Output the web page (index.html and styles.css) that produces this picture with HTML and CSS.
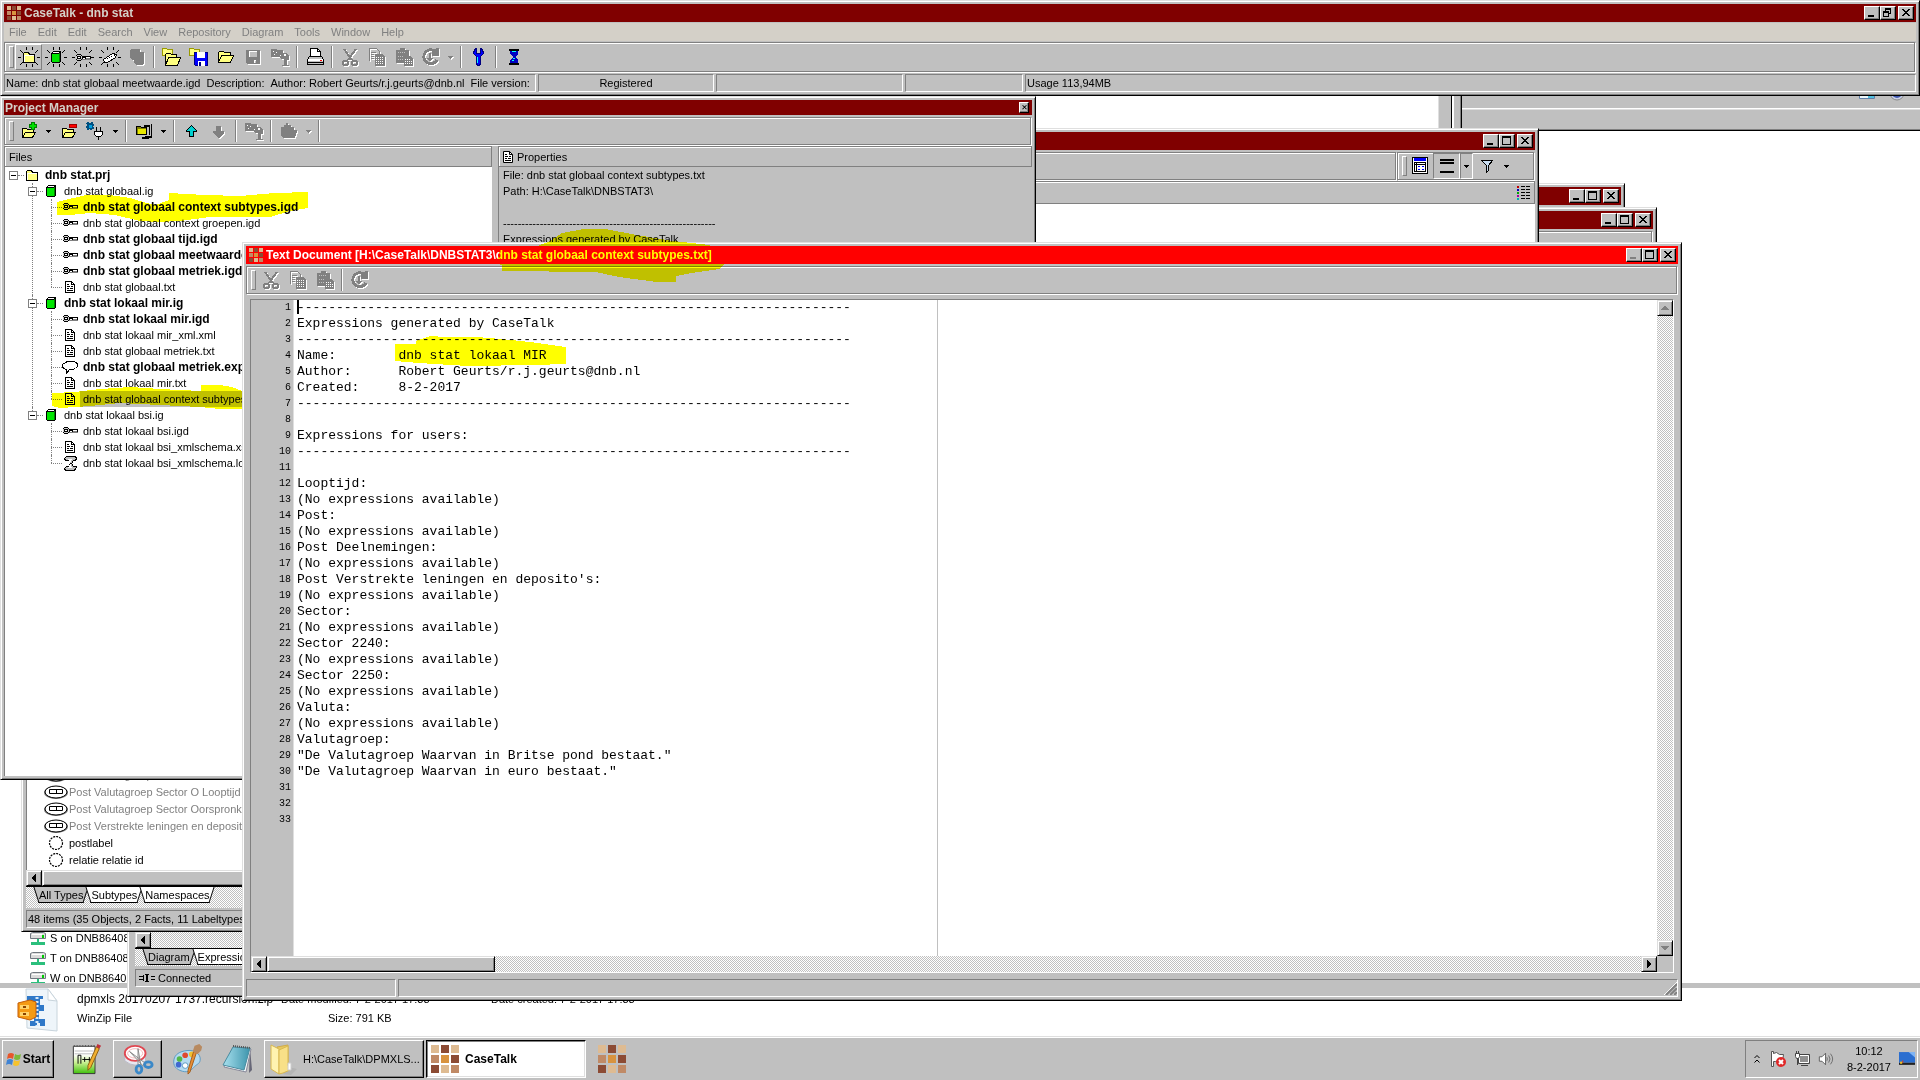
FILE: index.html
```html
<!DOCTYPE html>
<html lang="en">
  <head>
    <meta charset="UTF-8" />
    <meta name="viewport" content="width=device-width, initial-scale=1.0" />
    <title>CaseTalk - dnb stat</title>
    <link rel="stylesheet" href="styles.css">
  </head>
  <body>
    <!-- Icon set -->
    <svg class="defs" aria-hidden="true">
      <symbol id="logo" viewBox="0 0 28 28">
        <path fill="#debb92" d="M0 0h8v8H0zM20 0h8v8h-8zM10 20h8v8h-8z" />
        <path fill="#8c4b34" d="M10 0h8v8h-8zM20 10h8v8h-8zM0 20h8v8H0z" />
        <path fill="#c08a66" d="M0 10h8v8H0zM20 20h8v8h-8z" />
        <path fill="#d8933f" d="M10 10h8v8h-8z" />
      </symbol>
      <symbol id="min" viewBox="0 0 12 10"><path fill="currentColor" d="M2 7h6v2H2z" /></symbol>
      <symbol id="max" viewBox="0 0 12 10"><path fill="currentColor" d="M1 0h9v9H1zM2 2v6h7V2z" fill-rule="evenodd" /></symbol>
      <symbol id="restore" viewBox="0 0 12 10"><path fill="currentColor" fill-rule="evenodd" d="M3 0h6v6H7v3H1V3h2zM4 2v1h3v2h1V2zM2 5v3h4V5z" /></symbol>
      <symbol id="close" viewBox="0 0 12 10"><path fill="currentColor" d="M2 1h2v1h1v1h2V2h1V1h2v1H9v1H8v1H7v1h1v1h1v1h1v1H8V7H7V6H5v1H4v1H2V7h1V6h1V5h1V4H4V3H3V2H2z" /></symbol>
      <symbol id="left" viewBox="0 0 10 10"><path fill="currentColor" d="M6 1h1v8H6V8H5V7H4V6H3V4h1V3h1V2h1z" /></symbol>
      <symbol id="right" viewBox="0 0 10 10"><path fill="currentColor" d="M3 1h1v1h1v1h1v1h1v2H6v1H5v1H4v1H3z" /></symbol>
      <symbol id="up" viewBox="0 0 10 10"><path fill="currentColor" d="M4 3h2v1h1v1h1v1h1v1H1V6h1V5h1V4h1z" /></symbol>
      <symbol id="down" viewBox="0 0 10 10"><path fill="currentColor" d="M1 3h8v1H8v1H7v1H6v1H4V6H3V5H2V4H1z" /></symbol>
      <symbol id="drop" viewBox="0 0 5 3"><path fill="currentColor" d="M0 0h5v1H4v1H3v1H2V2H1V1H0z" /></symbol>

      <symbol id="rays" viewBox="0 0 24 20">
        <path stroke="#000" fill="none" d="M1 10.500h3M20 10.500h3M3 3l3 3M21 3l-3 3M3 18l3-3M21 18l-3-3M9.500 0v3M15.500 0v3M9.500 17v3M15.500 17v3" />
      </symbol>
      <symbol id="folder" viewBox="0 0 16 16">
        <path fill="#ffff80" stroke="#000" d="M2.500 13.500v-9l1-1h4l1 2h5v8z" />
        <path fill="#fff" d="M3 6h1v7H3zM3 6h10v1H3z" />
      </symbol>
      <symbol id="openfolder" viewBox="0 0 20 20">
        <path fill="#ffff80" stroke="#000" d="M2.500 15.500v-10l1-1h4l1 1h6v3h3l-3 7z" />
        <path fill="none" stroke="#000" d="M2.500 15.500l3-7h10" />
      </symbol>
      <symbol id="openfolders" viewBox="0 0 20 20">
        <path fill="#ffff80" stroke="#999900" d="M.500 8.500v-7h4l1 1h5v6z" />
        <path fill="#ffff80" stroke="#000" d="M3.500 18.500v-11l1-1h4l1 1h5v3h4l-3 8z" />
        <path fill="none" stroke="#000" d="M3.500 18.500l3-8h10" />
      </symbol>
      <symbol id="savefolder" viewBox="0 0 20 20">
        <path fill="#ffff80" stroke="#999900" d="M.500 8.500v-7h4l1 1h5v6z" />
        <path fill="#00f" stroke="#000080" d="M5.500 5.500h13v13h-12l-1-1z" />
        <path fill="#fff" d="M8 5h8v6H8zM9 14h7v5H9z" /><path fill="#000080" d="M10 15h2v4h-2z" />
      </symbol>
      <symbol id="disk" viewBox="0 0 20 20">
        <path fill="#808080" fill-rule="evenodd" d="M3 3h14v14H4l-1-1zM6 4v6h8V4zM11 13h2v3h-2z" />
      </symbol>
      <symbol id="db" viewBox="0 0 16 16">
        <path fill="#000" d="M4 3l1-1h8v10l-1 2H4l-1-1V4z" />
        <path fill="#00e600" d="M4 5h7v8H4z" /><path fill="#008000" d="M11 5l1-2v9l-1 1z" />
        <path fill="#fff" d="M5 3h6v1H5z" />
      </symbol>
      <symbol id="key" viewBox="0 0 16 16">
        <path fill="#000" d="M1 5h1V4h4v1h1v1h9v4H7v0H6v1H2v-1H1z" />
        <path fill="#d0d0d0" d="M2 5h4v1H2zM1 6h1v3H1zM2 9h4v1H2zM6 6h1v3H6z" />
        <path fill="#fff" d="M3 7h2v1H3zM8 8h2v1H8zM11 7h4v1h-4z" />
        <path fill="#808080" d="M11 8h4v1h-4zM7 9h9v1H7z" />
      </symbol>
      <symbol id="tag" viewBox="0 0 16 16">
        <path fill="#fff" stroke="#000" d="M1.500 10.500l9-6 4 1-1 3-8 5h-3z" />
        <path fill="#000" d="M5 9h1v1H5zM7 8h1v1H7zM9 7h1v1H9zM12 6h1v1h-1z" />
      </symbol>
      <symbol id="stack" viewBox="0 0 20 20">
        <path fill="#808080" d="M3 3l1-1h8l1 1v2h3l1 1v10l-2 2H9l-2-2v-3H5l-2-2z" />
      </symbol>
      <symbol id="info" viewBox="0 0 20 20">
        <path fill="#808080" d="M1 2h5l1 1h6v7H1zM9 6h8l2 3v4h-2v5h2v1h-7v-1h2v-6h-3z" />
        <path fill="#fff" d="M3 4h1v1H3zM6 5h1v1H6zM4 7h1v1H4zM10 8h1v1h-1zM14 7h2v2h-2z" />
      </symbol>
      <symbol id="printer" viewBox="0 0 20 20">
        <path fill="#fff" stroke="#000" d="M5.500 10.500v-9h7l3 3v6z" />
        <path fill="none" stroke="#000" d="M12.500 1.500v3h3" />
        <path fill="#c0c0c0" stroke="#000" d="M2.500 12.500l2-3h12l2 3v5h-16z" />
        <path fill="#fff" d="M3 12h15v2H3z" /><path fill="red" d="M15 13h2v1h-2z" /><path d="M3 15h15v1H3z" />
      </symbol>
      <symbol id="cut" viewBox="0 0 20 20">
        <path fill="none" stroke="#808080" stroke-width="2" d="M4 2l8 11M16 2L8 13" />
        <path fill="none" stroke="#808080" stroke-width="2" d="M4 14h3l1 1v2l-1 1H4l-1-1v-2zM13 14h3l1 1v2l-1 1h-3l-1-1v-2z" />
      </symbol>
      <symbol id="copy" viewBox="0 0 20 20">
        <path fill="none" stroke="#808080" d="M2.500 13.500v-12h7l3 3v2M4 5.500h5M4 7.500h3M4 9.500h3M4 11.500h3" />
        <path fill="#808080" d="M8 7h7l3 3v9H8z" />
        <path stroke="#fff" d="M9 10.500h7M9 12.500h8M9 14.500h8M9 16.500h8" stroke-dasharray="1 1" />
      </symbol>
      <symbol id="paste" viewBox="0 0 20 20">
        <path fill="#808080" d="M2 3h4V1h5v2h4v6h-4v7H2zM10 9h6l3 3v7h-9z" />
        <path stroke="#fff" d="M11 12.500h6M11 14.500h7M11 16.500h7" stroke-dasharray="1 1" />
        <path stroke="#c0c0c0" d="M4 5.500h7M4 9.500h5M4 12.500h5" stroke-dasharray="1 1" />
      </symbol>
      <symbol id="refresh" viewBox="0 0 20 20">
        <path fill="none" stroke="#808080" stroke-width="3" d="M15 5a7 7 0 1 0 1 8" />
        <path fill="#808080" d="M12 2l6-1v8h-7zM8 6h2v5h2l-3 4-3-4h2z" />
      </symbol>
      <symbol id="wrench" viewBox="0 0 20 20">
        <path fill="#00f" stroke="#000080" d="M5.500 2.500l-1 4 3 3v8l2 1 2-1v-8l3-3-1-4-2-1v5h-4v-5z" />
        <path fill="#00ffff" d="M8 10h1v6H8z" />
      </symbol>
      <symbol id="hourglass" viewBox="0 0 20 20">
        <path fill="#000" d="M5 2h10v2H5zM5 16h10v2H5z" />
        <path fill="#0000c0" d="M6 4h8v3l-3 3 3 3v3H6v-3l3-3-3-3z" />
        <path fill="#00ffff" d="M8 4h4v1H8zM9 11h2v1H9zM8 13h2v1H8z" />
      </symbol>
      <symbol id="addfolder" viewBox="0 0 20 20">
        <path fill="#ffff80" stroke="#000" d="M3.500 16.500v-9h4l1 1h6v3h2l-3 5z" />
        <path fill="none" stroke="#000" d="M3.500 16.500l3-5h9" />
        <path fill="#00e000" stroke="#008000" d="M12.500 1.500h3v2h2v3h-2v2h-3v-2h-2v-3h2z" />
      </symbol>
      <symbol id="delfolder" viewBox="0 0 20 20">
        <path fill="#ffff80" stroke="#000" d="M3.500 16.500v-9h4l1 1h6v3h2l-3 5z" />
        <path fill="none" stroke="#000" d="M3.500 16.500l3-5h9" />
        <path fill="red" stroke="#a00000" d="M10.500 3.500h7v3h-7z" />
      </symbol>
      <symbol id="plug" viewBox="0 0 20 20">
        <path fill="#005080" d="M1 1h2v1h2V1h2v2h1v2H7v1h1v2H6v1H4V8H3v1H1V7H0V5h1V3H0z" /><path fill="#00a0e0" d="M3 4h3v3H3z" />
        <path fill="#fff" stroke="#000" d="M8.500 10.500h8v3l-2 2h-4l-2-2zM10.500 10v-4M14.500 10v-4" /><path fill="none" stroke="#000" d="M12.500 16v3" />
      </symbol>
      <symbol id="clamp" viewBox="0 0 20 20">
        <path fill="#808000" stroke="#000" d="M2.500 13.500v-8h4l1 1h5v7z" />
        <path fill="#e8e800" d="M4 8h8v5H4z" />
        <path fill="none" stroke="#000" stroke-width="3" d="M10 4h6v11h-5" />
        <path fill="none" stroke="#c0c0c0" d="M10 3.500h6.500v11H11" /><path fill="#000" d="M8 16h7v2H8z" />
      </symbol>
      <symbol id="arrowup" viewBox="0 0 20 20"><path fill="#00d0d0" stroke="#000" d="M9.500 4.500l-5 5v1h3v5h4v-5h3v-1z" /></symbol>
      <symbol id="arrowdown" viewBox="0 0 20 20"><path fill="#808080" d="M7 5h5v5h3v2l-5 5H9l-5-5v-2h3z" /></symbol>
      <symbol id="grayfolder" viewBox="0 0 20 20"><path fill="#808080" d="M2 6h3V4h2V2h2v2h3v2h3v3h3v2l-2 6H4l-2-2z" /></symbol>

      <symbol id="doc" viewBox="0 0 16 16">
        <path fill="#fff" stroke="#000" d="M3.500 13.500v-11h6l3 3v8z" />
        <path fill="none" stroke="#000" d="M9.500 2.500v3h3M5 5.500h2M5 7.500h3M9 7.500h2M5 9.500h2M8 9.500h3M5 11.500h6" />
      </symbol>
      <symbol id="bubble" viewBox="0 0 16 16">
        <path fill="#fff" stroke="#000" d="M3.500 3.500l2-1h6l3 1 1 2v2l-2 2-3 1h-3l-3 4v-4l-3-1-1-2v-2z" />
      </symbol>
      <symbol id="scroll" viewBox="0 0 16 16">
        <path fill="#c0c0c0" stroke="#000" d="M2.500 3.500l2-2h9l1 2-1 2h-2l-2 3 2 3h3l-1 3-2 1h-8l-1-2 2-2h2l2-3-2-3h-3z" />
        <path fill="#fff" d="M6 4h4L8 8l2 5H6l2-4z" />
      </symbol>
      <symbol id="object" viewBox="0 0 24 14">
        <ellipse cx="12" cy="7.500" rx="11" ry="5.500" fill="#fff" stroke="#808080" stroke-width="2" />
        <ellipse cx="12" cy="7" rx="11" ry="6" fill="#fff" stroke="#000" />
        <path fill="none" stroke="#000" d="M5.500 4.500h13v4h-13zM12.500 4.500v4" />
      </symbol>
      <symbol id="label" viewBox="0 0 24 14"><circle cx="12" cy="7" r="6.500" fill="none" stroke="#000" stroke-width="1.200" stroke-dasharray="2 1" /></symbol>
      <symbol id="drive" viewBox="0 0 16 16">
        <path fill="#dcdcdc" stroke="#707880" d="M.500 3.500l2-1h11l2 1v5H.500z" /><path fill="#fff" d="M2 4h10v1H2z" />
        <path fill="#0c0" d="M12 5h2v3h-2z" /><path fill="#2bbf7c" d="M7 9h2v3h6v3H1v-3h6z" />
      </symbol>
      <symbol id="link" viewBox="0 0 16 10"><path fill="none" stroke="#000" d="M0 3.500h4M0 6.500h4M4.500 2v6M12 3.500h4M12 6.500h4" /><path d="M6 1h4v1H9v6h1v1H6V8h1V2H6z" /></symbol>

      <symbol id="winzip" viewBox="0 0 44 46">
        <path fill="#eef5fa" stroke="#c8d4dc" d="M9 1h22l9 12v30l-30-3z" /><path fill="#fff" stroke="#c8d4dc" d="M31 1v11l9 1z" />
        <path fill="#2f78c8" d="M10 8h16v3h-3v6h4v6h-5v8h6v7h-5v-3h-3v3h-7v-5h4v-9h-7z" />
        <path stroke="#d6e9fa" stroke-width="3" stroke-dasharray="2 2" d="M20 9v29" />
        <path fill="#f59a13" stroke="#c45d08" d="M1 15l12-3 6 2v15l-6 3-12-3z" /><path fill="#ffd36a" d="M3 17h9v4H3zM3 24h9v4H3z" />
        <path fill="#8a4300" d="M6 18h3v2H6zM6 25h3v2H6z" />
      </symbol>
      <symbol id="winflag" viewBox="0 0 16 16">
        <path fill="#e8562a" d="M2 3q3-2 6 0L7 8Q4 6 1 8z" /><path fill="#7db83a" d="M9 3q3 2 6 0l-1 5q-3 2-6 0z" />
        <path fill="#3f83d4" d="M1 9q3-2 6 0l-1 5q-3-2-6 0z" /><path fill="#f6c22d" d="M8 9q3 2 6 0l-1 5q-3 2-6 0z" />
      </symbol>
      <symbol id="npp" viewBox="0 0 32 34">
        <defs><linearGradient id="g1" x2="0" y2="1"><stop offset=".3" stop-color="#fff" /><stop offset=".6" stop-color="#c8f090" /><stop offset="1" stop-color="#3fc00c" /></linearGradient></defs>
        <path fill="url(#g1)" stroke="#333" d="M1.500 3.500h23v29h-23z" /><path stroke="#555" stroke-width="2" stroke-dasharray="1 2" d="M2 3h22" />
        <path stroke="#bbb" d="M3 8.500h20M3 11.500h20" />
        <path fill="none" stroke="#000" d="M6.500 22v-9h3v9M11 17.500h5M13.500 15v5M16 17.500h5M18.500 15v5" />
        <path fill="#f0b030" stroke="#8a5a10" d="M26 4l3 2-9 20-3 3v-5z" /><path fill="#c0303a" d="M27 1l4 2-2 3-3-2z" />
      </symbol>
      <symbol id="snip" viewBox="0 0 34 34">
        <path fill="#e8e8f0" stroke="#b8b8c4" d="M3 13v6q11 9 22 0v-6z" />
        <ellipse cx="14" cy="11" rx="11" ry="8" fill="#fff" stroke="#e04852" stroke-width="2" /><ellipse cx="14" cy="11" rx="8" ry="5" fill="none" stroke="#f4b4b8" />
        <path fill="#f4f4f4" stroke="#888" d="M8 9l14 15 2-3zM17 6l3 17h-3z" />
        <ellipse cx="18" cy="28" rx="3" ry="4" fill="none" stroke="#3a88c8" stroke-width="3" /><ellipse cx="28" cy="23" rx="4" ry="3" fill="none" stroke="#3a88c8" stroke-width="3" />
      </symbol>
      <symbol id="paint" viewBox="0 0 34 34">
        <path fill="#b4daf0" stroke="#5a98c0" d="M16 8c9-1 14 4 14 9s-3 5-6 8-6 7-13 5S1 24 2 18s6-9 14-10z" />
        <circle cx="8" cy="17" r="3" fill="#54b848" /><circle cx="14" cy="13" r="3" fill="#e04830" /><circle cx="21" cy="12" r="3" fill="#f0c030" />
        <circle cx="7" cy="23" r="3" fill="#4068d0" /><circle cx="14" cy="24" r="3" fill="#fff" stroke="#5a98c0" />
        <path fill="#e89038" stroke="#a05a18" d="M26 10l-7 21-2 2v-4l6-20z" /><path fill="#b88a60" d="M22 9l2-6 5-2 3 3-1 4-4 4z" />
      </symbol>
      <symbol id="notepad" viewBox="0 0 32 32">
        <defs><linearGradient id="g2"><stop offset="0" stop-color="#a8e0ee" /><stop offset="1" stop-color="#3c94ac" /></linearGradient></defs>
        <path fill="#667" d="M28 5l2 22-3 3z" /><path fill="#f4f8fa" stroke="#889" d="M11 4l18 2-5 23-22-5z" />
        <path fill="url(#g2)" stroke="#4a8ca0" d="M11 4l17 1-6 22-21-5z" /><path stroke="#555" stroke-width="2" stroke-dasharray="1 1" d="M11 3l18 2" />
      </symbol>
      <symbol id="bigfolder" viewBox="0 0 28 32">
        <path fill="#b4b4b4" d="M20 24l8 2-6 6-8-1z" />
        <path fill="#e8c860" stroke="#d0ac48" d="M8 4l11-2v22l-6 4z" /><path fill="#fff3b0" stroke="#d8b850" d="M2 2l8 4v25l-8-5z" />
        <path fill="#f8e088" stroke="#d8b850" d="M10 7l9-4v19l2 5-7 3-4 1z" /><path fill="#fff" stroke="#ccc" d="M19 20h3v7h-3z" />
      </symbol>
      <symbol id="flag" viewBox="0 0 16 16">
        <path fill="#fff" stroke="#555" d="M1.500 15.500v-15h2v2l3-1 3 2h4l-1 7-4-1-3 1h-2v5z" />
        <circle cx="11" cy="11" r="5" fill="#e02828" /><path stroke="#fff" stroke-width="2" d="M9 9l4 4M13 9l-4 4" />
      </symbol>
      <symbol id="net" viewBox="0 0 16 16">
        <path fill="#909090" stroke="#444" d="M4.500 3.500h11v9h-11z" /><path fill="none" stroke="#fff" d="M5.500 4.500h9v7h-9z" />
        <path fill="#fff" stroke="#444" d="M1.500 5.500v-3h4v3l-1 2h-2zM2.500 0v2M4.500 0v2M3.500 8v6M7 14.500h7" />
      </symbol>
      <symbol id="volume" viewBox="0 0 18 16">
        <path fill="#fff" stroke="#555" d="M1.500 5.500h3l4-4v13l-4-4h-3z" /><path fill="none" stroke="#666" d="M10 6q1 2 0 4M12 4q3 4 0 8M14 2q5 6 0 12" />
      </symbol>
      <symbol id="chevrons" viewBox="0 0 6 10"><path fill="none" stroke="#000" d="M.500 4l2.500-2.500 2.500 2.500M.500 8.500l2.500-2.500 2.500 2.500" /></symbol>
      <symbol id="screen" viewBox="0 0 15 13">
        <path fill="#2a6ed0" d="M0 0h15v10H0z" /><path fill="#7fb4f4" d="M9 0h6v5z" /><path fill="#222" d="M0 10h15v2H0z" />
        <path fill="#f0c020" d="M1 9h2v2H1z" /><path fill="#e04020" d="M3 8h1v2H3z" />
      </symbol>
      <symbol id="cards" viewBox="0 0 16 16"><path fill="#eef8fc" stroke="#6080a8" d="M.500 3.500h15v10H.500z" /><path fill="#50c0e0" d="M9 4h6v9H9z" /><path fill="#fff" d="M10 6h4v1h-4zM10 9h4v1h-4z" /></symbol>
      <symbol id="ring" viewBox="0 0 16 16"><circle cx="8" cy="8" r="7" fill="#c8d0e8" stroke="#888" /><circle cx="8" cy="8" r="5" fill="#4058b0" /></symbol>
      <symbol id="form" viewBox="0 0 16 18">
        <path fill="#fff" stroke="#000" d="M.500.500h15v16H.500z" /><path fill="#00f" d="M2 1h12v3H2z" />
        <path fill="none" stroke="#000" d="M2.500 5.500h11v9h-11zM2 7.500h11M4.500 6v8" /><path fill="#00f" d="M6 9h2v1H6zM10 9h2v1h-2zM6 12h2v1H6zM10 12h2v1h-2z" />
      </symbol>
      <symbol id="lines" viewBox="0 0 14 16"><path d="M0 1h14v2H0zM0 4h14v2H0zM0 13h14v2H0z" /></symbol>
      <symbol id="funnel" viewBox="0 0 14 14"><path fill="#c8dcf0" stroke="#000" d="M1.500 1.500h11l-4 5v5l-2 2v-7z" /></symbol>
      <symbol id="list" viewBox="0 0 14 14">
        <path fill="#c00000" d="M0 0h2v2H0z" /><path fill="#0000c0" d="M0 3h2v2H0z" /><path fill="#00a000" d="M0 6h2v2H0z" /><path fill="#a000a0" d="M0 9h2v2H0z" /><path fill="#00b0b0" d="M0 12h2v2H0z" />
        <path stroke="#000" d="M4 .500h4M9 .500h4M4 3.500h4M9 3.500h4M4 6.500h4M9 6.500h4M4 9.500h4M9 9.500h4M4 12.500h4M9 12.500h4" />
      </symbol>
      <symbol id="grip" viewBox="0 0 13 13"><path stroke="#fff" d="M0 13L13 0M5 13l8-8M9 13l4-4" /><path stroke="#808080" stroke-width="2" d="M2 13L13 2M6 13l7-7M10 13l3-3" /></symbol>
    </svg>

    <main class="desktop">
      <!-- Explorer behind everything -->
      <section class="explorer">
        <ul class="drives">
          <li><svg class="i16"><use href="#drive" /></svg>S on DNB86408</li>
          <li><svg class="i16"><use href="#drive" /></svg>T on DNB86408</li>
          <li><svg class="i16"><use href="#drive" /></svg>W on DNB86408</li>
        </ul>
        <div class="details">
          <svg class="file-icon"><use href="#winzip" /></svg>
          <div class="file-info">
            <span class="file-name">dpmxls 20170207 1737.recursion.zip</span>
            <span>Date modified: 7-2-2017 17:38</span>
            <span class="created">Date created: 7-2-2017 17:38</span>
            <span>WinZip File</span>
            <span class="size">Size: 791 KB</span>
          </div>
        </div>
      </section>

      <div class="pane-a"></div>
      <div class="pane-b">
        <svg class="i16"><use href="#cards" /></svg>
        <svg class="i16"><use href="#ring" /></svg>
      </div>

      <!-- Main application window -->
      <section class="window main-window">
        <header class="title">
          <svg class="logo"><use href="#logo" /></svg>
          <h1>CaseTalk - dnb stat</h1>
          <div class="win-btns">
            <button aria-label="Minimize"><svg><use href="#min" /></svg></button>
            <button aria-label="Restore"><svg><use href="#restore" /></svg></button>
            <button aria-label="Close" class="x"><svg><use href="#close" /></svg></button>
          </div>
        </header>
        <nav class="menu">
          <button>File</button><button>Edit</button><button>Edit</button><button>Search</button><button>View</button><button>Repository</button><button>Diagram</button><button>Tools</button><button>Window</button><button>Help</button>
        </nav>
        <div class="toolbar">
          <button class="pressed" aria-label="New project"><svg class="i24"><use href="#rays" /><use href="#folder" x="4" y="2" width="16" height="16" /></svg></button>
          <button aria-label="New repository"><svg class="i24"><use href="#rays" /><use href="#db" x="4" y="2" width="16" height="16" /></svg></button>
          <button aria-label="New diagram"><svg class="i24"><use href="#rays" /><use href="#key" x="4" y="3" width="16" height="16" /></svg></button>
          <button aria-label="New label"><svg class="i24"><use href="#rays" /><use href="#tag" x="4" y="2" width="16" height="16" /></svg></button>
          <button aria-label="Copies" disabled><svg><use href="#stack" /></svg></button>
          <i class="sep"></i>
          <button aria-label="Open project"><svg><use href="#openfolders" /></svg></button>
          <button aria-label="Save project"><svg><use href="#savefolder" /></svg></button>
          <button aria-label="Open"><svg><use href="#openfolder" /></svg></button>
          <button aria-label="Save" disabled><svg><use href="#disk" /></svg></button>
          <button aria-label="Info" disabled><svg><use href="#info" /></svg></button>
          <i class="sep"></i>
          <button aria-label="Print"><svg><use href="#printer" /></svg></button>
          <i class="sep"></i>
          <button aria-label="Cut" disabled><svg><use href="#cut" /></svg></button>
          <button aria-label="Copy" disabled><svg><use href="#copy" /></svg></button>
          <button aria-label="Paste" disabled><svg><use href="#paste" /></svg></button>
          <button aria-label="Refresh" disabled><svg><use href="#refresh" /></svg></button>
          <button aria-label="More" class="drop" disabled><svg><use href="#drop" /></svg></button>
          <i class="sep"></i>
          <button aria-label="Options"><svg><use href="#wrench" /></svg></button>
          <i class="sep"></i>
          <button aria-label="Wait"><svg><use href="#hourglass" /></svg></button>
        </div>
        <footer class="status">
          <div class="cell c-file"><span>Name: dnb stat globaal meetwaarde.igd</span><span>Description:</span><span>Author: Robert Geurts/r.j.geurts@dnb.nl</span><span>File version:</span></div>
          <div class="cell c-reg">Registered</div>
          <div class="cell c-blank"></div>
          <div class="cell c-short"></div>
          <div class="cell">Usage 113,94MB</div>
        </footer>
      </section>

      <!-- Inactive document windows -->
      <section class="window win-c">
        <header class="title">
          <div class="win-btns">
            <button aria-label="Minimize"><svg><use href="#min" /></svg></button>
            <button aria-label="Maximize"><svg><use href="#max" /></svg></button>
            <button aria-label="Close" class="x"><svg><use href="#close" /></svg></button>
          </div>
        </header>
      </section>
      <section class="window win-d">
        <header class="title">
          <div class="win-btns">
            <button aria-label="Minimize"><svg><use href="#min" /></svg></button>
            <button aria-label="Maximize"><svg><use href="#max" /></svg></button>
            <button aria-label="Close" class="x"><svg><use href="#close" /></svg></button>
          </div>
        </header>
        <div class="toolbar"></div>
      </section>
      <section class="window win-b">
        <header class="title">
          <div class="win-btns">
            <button aria-label="Minimize"><svg><use href="#min" /></svg></button>
            <button aria-label="Maximize"><svg><use href="#max" /></svg></button>
            <button aria-label="Close" class="x"><svg><use href="#close" /></svg></button>
          </div>
        </header>
        <div class="bars">
          <div class="toolbar plain"></div>
          <div class="toolbar view-tools">
            <button aria-label="Form"><svg class="form"><use href="#form" /></svg></button>
            <button aria-label="Rows" class="sunk"><svg class="rows"><use href="#lines" /></svg></button>
            <button aria-label="Row options" class="drop sunk"><svg><use href="#drop" /></svg></button>
            <button aria-label="Filter"><svg class="funnel"><use href="#funnel" /></svg></button>
            <button aria-label="Filter options" class="drop"><svg><use href="#drop" /></svg></button>
          </div>
        </div>
        <div class="list-head"><svg class="list"><use href="#list" /></svg></div>
        <div class="blank"></div>
      </section>

      <section class="window win-diagram">
        <div class="dither"><button class="bevel" aria-label="Scroll left"><svg><use href="#left" /></svg></button></div>
        <div class="tabs"><button class="tab on">Diagram</button><button class="tab">Expressions</button></div>
        <div class="status"><div class="cell"><svg class="link"><use href="#link" /></svg>Connected</div></div>
      </section>

      <section class="window win-types">
        <ul class="types">
          <li class="fact"><svg><use href="#object" /></svg>Post Valutagroep Sector</li>
          <li class="fact"><svg><use href="#object" /></svg>Post Valutagroep Sector O Looptijd R</li>
          <li class="fact"><svg><use href="#object" /></svg>Post Valutagroep Sector Oorspronkelijk</li>
          <li class="fact"><svg><use href="#object" /></svg>Post Verstrekte leningen en deposito's</li>
          <li><svg><use href="#label" /></svg>postlabel</li>
          <li><svg><use href="#label" /></svg>relatie relatie id</li>
          <li><svg><use href="#object" /></svg></li>
        </ul>
        <div class="dither"><button class="bevel" aria-label="Scroll left"><svg><use href="#left" /></svg></button><div class="thumb fill"></div></div>
        <div class="tabs tall"><button class="tab on">All Types</button><button class="tab">Subtypes</button><button class="tab">Namespaces</button></div>
        <div class="status"><div class="cell">48 items (35 Objects, 2 Facts, 11 Labeltypes)</div></div>
      </section>

      <!-- Project manager -->
      <section class="window pm">
        <header class="title small">
          <h2>Project Manager</h2>
          <button class="tiny-x" aria-label="Close"><svg><use href="#close" /></svg></button>
        </header>
        <div class="toolbar">
          <button aria-label="Add"><svg><use href="#addfolder" /></svg></button><button class="drop" aria-label="Add options"><svg><use href="#drop" /></svg></button>
          <button aria-label="Remove"><svg><use href="#delfolder" /></svg></button>
          <button aria-label="Connect"><svg><use href="#plug" /></svg></button><button class="drop" aria-label="Connect options"><svg><use href="#drop" /></svg></button>
          <i class="sep"></i>
          <button aria-label="Archive"><svg><use href="#clamp" /></svg></button><button class="drop" aria-label="Archive options"><svg><use href="#drop" /></svg></button>
          <i class="sep"></i>
          <button aria-label="Move up"><svg><use href="#arrowup" /></svg></button>
          <button aria-label="Move down" disabled><svg><use href="#arrowdown" /></svg></button>
          <i class="sep"></i>
          <button aria-label="Info" disabled><svg><use href="#info" /></svg></button>
          <i class="sep"></i>
          <button aria-label="Folder" disabled><svg><use href="#grayfolder" /></svg></button><button class="drop" aria-label="Folder options" disabled><svg><use href="#drop" /></svg></button>
          <i class="sep"></i>
        </div>
        <div class="pm-body">
          <div class="files">
            <div class="head">Files</div>
            <ul class="tree">
              <li>
                <div class="row"><i class="box"></i><i class="dots"></i><svg><use href="#folder" /></svg><b>dnb stat.prj</b></div>
                <ul>
                  <li>
                    <div class="row"><i class="box"></i><i class="dots"></i><svg><use href="#db" /></svg><span>dnb stat globaal.ig</span></div>
                    <ul>
                      <li><div class="row leaf"><i class="dots"></i><svg><use href="#key" /></svg><b>dnb stat globaal context subtypes.igd</b></div></li>
                      <li><div class="row leaf"><i class="dots"></i><svg><use href="#key" /></svg><span>dnb stat globaal context groepen.igd</span></div></li>
                      <li><div class="row leaf"><i class="dots"></i><svg><use href="#key" /></svg><b>dnb stat globaal tijd.igd</b></div></li>
                      <li><div class="row leaf"><i class="dots"></i><svg><use href="#key" /></svg><b>dnb stat globaal meetwaarde.igd</b></div></li>
                      <li><div class="row leaf"><i class="dots"></i><svg><use href="#key" /></svg><b>dnb stat globaal metriek.igd</b></div></li>
                      <li><div class="row leaf"><i class="dots"></i><svg><use href="#doc" /></svg><span>dnb stat globaal.txt</span></div></li>
                    </ul>
                  </li>
                  <li>
                    <div class="row"><i class="box"></i><i class="dots"></i><svg><use href="#db" /></svg><b>dnb stat lokaal mir.ig</b></div>
                    <ul>
                      <li><div class="row leaf"><i class="dots"></i><svg><use href="#key" /></svg><b>dnb stat lokaal mir.igd</b></div></li>
                      <li><div class="row leaf"><i class="dots"></i><svg><use href="#doc" /></svg><span>dnb stat lokaal mir_xml.xml</span></div></li>
                      <li><div class="row leaf"><i class="dots"></i><svg><use href="#doc" /></svg><span>dnb stat globaal metriek.txt</span></div></li>
                      <li><div class="row leaf"><i class="dots"></i><svg><use href="#bubble" /></svg><b>dnb stat globaal metriek.exp</b></div></li>
                      <li><div class="row leaf"><i class="dots"></i><svg><use href="#doc" /></svg><span>dnb stat lokaal mir.txt</span></div></li>
                      <li><div class="row leaf"><i class="dots"></i><svg><use href="#doc" /></svg><span class="selected">dnb stat globaal context subtypes.txt</span></div></li>
                    </ul>
                  </li>
                  <li>
                    <div class="row"><i class="box"></i><i class="dots"></i><svg><use href="#db" /></svg><span>dnb stat lokaal bsi.ig</span></div>
                    <ul>
                      <li><div class="row leaf"><i class="dots"></i><svg><use href="#key" /></svg><span>dnb stat lokaal bsi.igd</span></div></li>
                      <li><div class="row leaf"><i class="dots"></i><svg><use href="#doc" /></svg><span>dnb stat lokaal bsi_xmlschema.xsd</span></div></li>
                      <li><div class="row leaf"><i class="dots"></i><svg><use href="#scroll" /></svg><span>dnb stat lokaal bsi_xmlschema.log</span></div></li>
                    </ul>
                  </li>
                </ul>
              </li>
            </ul>
          </div>
          <div class="props">
            <div class="head"><svg class="i16"><use href="#doc" /></svg>Properties</div>
            <div class="prop-text">
              <p>File: dnb stat globaal context subtypes.txt</p>
              <p>Path: H:\CaseTalk\DNBSTAT3\</p>
              <p>&nbsp;</p>
              <p>----------------------------------------------------------</p>
              <p>Expressions generated by CaseTalk</p>
            </div>
          </div>
        </div>
      </section>

      <!-- Active text document -->
      <section class="window doc-window">
        <header class="title active">
          <svg class="logo"><use href="#logo" /></svg>
          <h2>Text Document [H:\CaseTalk\DNBSTAT3\dnb stat globaal context subtypes.txt]</h2>
          <div class="win-btns">
            <button aria-label="Minimize" disabled><svg><use href="#min" /></svg></button>
            <button aria-label="Maximize"><svg><use href="#max" /></svg></button>
            <button aria-label="Close" class="x"><svg><use href="#close" /></svg></button>
          </div>
        </header>
        <div class="toolbar">
          <button aria-label="Cut" disabled><svg><use href="#cut" /></svg></button>
          <button aria-label="Copy" disabled><svg><use href="#copy" /></svg></button>
          <button aria-label="Paste" disabled><svg><use href="#paste" /></svg></button>
          <i class="sep"></i>
          <button aria-label="Refresh" disabled><svg><use href="#refresh" /></svg></button>
        </div>
        <div class="editor">
          <div class="page">
            <pre class="gutter">1
2
3
4
5
6
7
8
9
10
11
12
13
14
15
16
17
18
19
20
21
22
23
24
25
26
27
28
29
30
31
32
33</pre>
            <i class="caret"></i>
            <textarea aria-label="Document text" spellcheck="false" wrap="off">
-----------------------------------------------------------------------
Expressions generated by CaseTalk
-----------------------------------------------------------------------
Name:        dnb stat lokaal MIR
Author:      Robert Geurts/r.j.geurts@dnb.nl
Created:     8-2-2017
-----------------------------------------------------------------------

Expressions for users:
-----------------------------------------------------------------------

Looptijd:
(No expressions available)
Post:
(No expressions available)
Post Deelnemingen:
(No expressions available)
Post Verstrekte leningen en deposito's:
(No expressions available)
Sector:
(No expressions available)
Sector 2240:
(No expressions available)
Sector 2250:
(No expressions available)
Valuta:
(No expressions available)
Valutagroep:
"De Valutagroep Waarvan in Britse pond bestaat."
"De Valutagroep Waarvan in euro bestaat."


</textarea>
          </div>
          <div class="dither vert">
            <button class="bevel" aria-label="Scroll up" disabled><svg><use href="#up" /></svg></button>
            <button class="bevel" aria-label="Scroll down" disabled><svg><use href="#down" /></svg></button>
          </div>
          <div class="dither">
            <button class="bevel" aria-label="Scroll left"><svg><use href="#left" /></svg></button>
            <div class="thumb"></div>
            <button class="bevel end" aria-label="Scroll right"><svg><use href="#right" /></svg></button>
          </div>
        </div>
        <footer class="status">
          <div class="cell c-pos"></div>
          <div class="cell last"><svg class="grip"><use href="#grip" /></svg></div>
        </footer>
      </section>

      <!-- Marker strokes -->
      <svg class="marker" aria-hidden="true">
        <path d="M57 202L86 195H110L130 198 147 203 156 205 169 200V193L205 195 240 196 275 193 308 192V208L290 211 270 217H210L180 221 158 222 140 221 115 215 90 213 70 215H57z" />
        <path d="M52 393L75 392 100 389 130 387 160 389 201 391V385H220L232 387 242 391V409L220 409 200 407 160 405 120 403 90 406 60 408 52 406z" />
        <path d="M395 344L416 344V341L430 336 446 337 477 337 501 339 530 342 566 347V364L534 365 468 366 419 363 395 361z" />
        <path d="M499 249L535 247 548 242 562 233 584 229 605 229 637 235 673 241 709 245 717 249V264H725L719 269 691 273 676 276V282H657L619 277 596 272 502 271V265L498 264z" />
      </svg>
    </main>

    <footer class="taskbar">
      <button class="task start"><svg class="i16"><use href="#winflag" /></svg>Start</button>
      <button class="task flat" aria-label="Notepad++"><svg><use href="#npp" /></svg></button>
      <button class="task tool" aria-label="Snipping Tool"><svg><use href="#snip" /></svg></button>
      <button class="task flat" aria-label="Paint"><svg><use href="#paint" /></svg></button>
      <button class="task flat" aria-label="Notepad"><svg><use href="#notepad" /></svg></button>
      <button class="task wide"><svg><use href="#bigfolder" /></svg>H:\CaseTalk\DPMXLS...</button>
      <button class="task wide current"><svg><use href="#logo" /></svg>CaseTalk</button>
      <button class="task flat" aria-label="CaseTalk"><svg class="i28"><use href="#logo" /></svg></button>
      <div class="tray">
        <svg class="chev"><use href="#chevrons" /></svg>
        <svg class="i16"><use href="#flag" /></svg>
        <svg class="i16"><use href="#net" /></svg>
        <svg class="i16"><use href="#volume" /></svg>
        <time><span>10:12</span><span>8-2-2017</span></time>
        <svg class="i16"><use href="#screen" /></svg>
      </div>
    </footer>
  </body>
</html>
```
FILE: styles.css
```css
* {
  box-sizing: border-box;
}

body {
  margin: 0;
  height: 100vh;
  display: flex;
  flex-direction: column;
  overflow: hidden;
  background: #fff;
  color: #000;
  font-family: "Liberation Sans", Arial, sans-serif;
  font-size: 11px;
  line-height: 16px;
}

h1,
h2,
p,
ul,
pre {
  margin: 0;
  padding: 0;
  list-style: none;
}

button {
  margin: 0;
  padding: 0;
  border: 0;
  background: none;
  color: inherit;
  font: inherit;
}

svg {
  display: block;
  flex: none;
}

.defs {
  position: absolute;
  width: 0;
  height: 0;
}

.i16 {
  width: 16px;
  height: 16px;
}

.desktop {
  position: relative;
  flex: 1;
  min-height: 0;
  overflow: hidden;
}

/* Windows */
.window {
  position: absolute;
  display: flex;
  flex-direction: column;
  padding: 3px;
  background: #c0c0c0;
  border: 1px solid;
  border-color: #dfdfdf #000 #000 #dfdfdf;
  box-shadow: inset 1px 1px #fff, inset -1px -1px #808080;
}

.title {
  display: flex;
  align-items: center;
  height: 18px;
  flex: none;
  margin-bottom: 1px;
  padding: 0 2px 0 3px;
  background: #800000;
  color: #d4d0c8;
}

.title.active {
  background: #f00;
  color: #fff;
}

.title.small {
  height: 15px;
  padding: 0 3px 0 1px;
  justify-content: space-between;
}

.title h1,
.title h2 {
  font-size: 12px;
  font-weight: bold;
  white-space: nowrap;
}

.logo {
  width: 14px;
  height: 14px;
  margin-right: 3px;
}

.win-btns {
  display: flex;
  margin-left: auto;
}

.win-btns button,
.tiny-x {
  width: 16px;
  height: 14px;
  padding: 1px;
  background: #c0c0c0;
  border: 1px solid;
  border-color: #fff #000 #000 #fff;
  box-shadow: inset -1px -1px #808080;
  color: #000;
}

.win-btns .x {
  margin-left: 2px;
}

.win-btns svg {
  width: 12px;
  height: 10px;
  shape-rendering: crispEdges;
}

.win-btns button:disabled {
  color: #808080;
}

.tiny-x {
  width: 10px;
  height: 11px;
}

.tiny-x svg {
  width: 7px;
  height: 7px;
}

.menu {
  display: flex;
  align-items: center;
  gap: 11px;
  height: 19px;
  padding-left: 5px;
  background: #d4d0c8;
  color: #808080;
}

/* Toolbars */
.toolbar {
  position: relative;
  display: flex;
  align-items: center;
  height: 28px;
  flex: none;
  margin: 1px 1px 1px 0;
  padding-left: 10px;
  border: 1px solid #808080;
  box-shadow: inset 1px 1px #fff, 1px 1px #fff;
}

.toolbar::before {
  content: "";
  position: absolute;
  left: 4px;
  top: 3px;
  bottom: 3px;
  width: 3px;
  border: 1px solid;
  border-color: #fff #808080 #808080 #fff;
}

.toolbar button {
  display: flex;
  align-items: center;
  justify-content: center;
  width: 27px;
  height: 26px;
}

.toolbar svg {
  width: 20px;
  height: 20px;
  shape-rendering: crispEdges;
}

.toolbar .i24 {
  width: 24px;
}

.toolbar .drop {
  width: 13px;
}

.toolbar .drop svg {
  width: 5px;
  height: 3px;
}

.toolbar button:disabled {
  color: #808080;
}

.toolbar button:disabled svg {
  filter: drop-shadow(1px 1px 0 #fff);
}

.toolbar .pressed {
  border: 1px solid;
  border-color: #fff #808080 #808080 #fff;
}

.sep {
  width: 8px;
  height: 22px;
  background: linear-gradient(to right, transparent 3px, #808080 3px 4px, #fff 4px 5px, transparent 5px);
}

/* Status bars */
.status {
  display: flex;
  gap: 2px;
}

.cell {
  flex: 1;
  display: flex;
  align-items: center;
  gap: 6px;
  height: 18px;
  padding: 0 1px;
  overflow: hidden;
  white-space: nowrap;
  border: 1px solid;
  border-color: #808080 #fff #fff #808080;
}

.main-window {
  left: 0;
  right: 0;
  top: 0;
  height: 96px;
}

.main-window .toolbar {
  height: 30px;
}

.main-window .status {
  margin-top: 1px;
}

.c-file {
  flex: 0 0 532px;
}

.c-reg {
  flex: 0 0 176px;
  justify-content: center;
}

.c-blank {
  flex: 0 0 187px;
}

.c-short {
  flex: 0 0 118px;
}

.c-pos {
  flex: 0 0 150px;
}

/* Explorer */
.explorer {
  height: 100%;
  display: flex;
  flex-direction: column;
}

.drives {
  flex: 1;
  min-height: 0;
  display: flex;
  flex-direction: column;
  justify-content: flex-end;
  overflow: hidden;
  padding-left: 30px;
}

.drives li {
  display: flex;
  align-items: center;
  gap: 4px;
  height: 20px;
  flex: none;
}

.drives li:last-child {
  margin-bottom: -5px;
}

.details {
  display: flex;
  height: 53px;
  padding-left: 17px;
  border-top: 5px solid #c0c0c0;
}

.file-icon {
  width: 44px;
  height: 46px;
}

.file-info {
  display: grid;
  grid-template-columns: 204px 210px 1fr;
  grid-template-rows: 22px 16px;
  align-items: center;
  align-content: start;
  padding-left: 16px;
  white-space: nowrap;
}

.file-name {
  font-size: 12px;
}

.size {
  padding-left: 47px;
}

/* Panes partly hidden at the top right */
.pane-a {
  position: absolute;
  left: 1438px;
  top: 90px;
  width: 25px;
  height: 50px;
  background: linear-gradient(to right, #dfdfdf 1px, #c0c0c0 1px 13px, #000 13px 14px, #fff 14px 16px, #c0c0c0 16px 22px, #808080 22px 23px, #000 23px 24px, #c0c0c0 24px);
}

.pane-b {
  position: absolute;
  left: 1462px;
  right: 0;
  top: 85px;
  height: 46px;
  display: flex;
  justify-content: flex-end;
  gap: 14px;
  padding: 0 15px;
  background: linear-gradient(to bottom, #c0c0c0 23px, #fff 23px 24px, #dfdfdf 24px 25px, #c0c0c0 25px 44px, #808080 44px 45px, #000 45px);
}

/* Inactive windows */
.win-b {
  left: 900px;
  top: 128px;
  width: 639px;
  height: 200px;
}

.win-c {
  left: 1100px;
  top: 183px;
  width: 525px;
  height: 200px;
}

.win-d {
  left: 1100px;
  top: 207px;
  width: 557px;
  height: 200px;
}

.bars {
  display: flex;
}

.plain {
  flex: 1;
}

.plain::before {
  display: none;
}

.view-tools {
  width: 137px;
  padding-left: 8px;
}

.toolbar .form {
  width: 16px;
  height: 18px;
}

.toolbar .rows {
  width: 14px;
  height: 16px;
}

.toolbar .funnel {
  width: 14px;
  height: 14px;
}

.toolbar .sunk {
  border: 1px solid;
  border-color: #808080 #fff #fff #808080;
}

.list-head {
  display: flex;
  align-items: center;
  justify-content: flex-end;
  height: 23px;
  flex: none;
  padding-right: 3px;
  border: 1px solid #808080;
  box-shadow: inset 1px 1px #fff;
}

.list {
  width: 14px;
  height: 14px;
  shape-rendering: crispEdges;
}

.blank {
  flex: 1;
  background: #fff;
}

/* Scrollbars */
.dither {
  display: flex;
  height: 16px;
  flex: none;
  background: repeating-conic-gradient(#c0c0c0 0 25%, #fff 0 50%) 0 0 / 2px 2px;
}

.dither.vert {
  flex-direction: column;
  justify-content: space-between;
  height: auto;
}

.bevel,
.thumb {
  width: 16px;
  height: 16px;
  flex: none;
  background: #c0c0c0;
  border: 1px solid;
  border-color: #dfdfdf #000 #000 #dfdfdf;
  box-shadow: inset 1px 1px #fff, inset -1px -1px #808080;
}

.bevel svg {
  width: 10px;
  height: 10px;
  margin: 0 auto;
  shape-rendering: crispEdges;
}

.bevel:disabled {
  color: #808080;
}

.bevel.end {
  margin-left: auto;
}

.thumb {
  width: 228px;
}

.thumb.fill {
  flex: 1;
}

/* Sheet tabs */
.tabs {
  display: flex;
  align-items: flex-start;
  height: 18px;
  flex: none;
  padding-left: 9px;
  border-top: 1px solid #000;
  background: repeating-conic-gradient(#c0c0c0 0 25%, #fff 0 50%) 0 0 / 2px 2px;
}

.tabs.tall {
  height: 22px;
}

.tab {
  position: relative;
  z-index: 0;
  padding: 0 4px;
  height: 16px;
  line-height: 16px;
  white-space: nowrap;
}

.tab::before,
.tab::after {
  content: "";
  position: absolute;
  z-index: -1;
  top: 0;
  bottom: 0;
  background: #fff;
  border-bottom: 1px solid #000;
}

.tab::before {
  left: 1px;
  right: 40%;
  border-left: 1px solid #000;
  transform: skewX(18deg);
}

.tab::after {
  left: 40%;
  right: 1px;
  border-right: 1px solid #000;
  transform: skewX(-18deg);
}

.tab.on::before,
.tab.on::after {
  background: #c0c0c0;
}

.win-diagram {
  left: 127px;
  top: 928px;
  width: 300px;
  height: 69px;
  padding: 3px 3px 3px 7px;
}

.win-diagram .status {
  margin-top: 3px;
}

.link {
  width: 16px;
  height: 10px;
  margin: 0 -3px 0 2px;
  shape-rendering: crispEdges;
}

.win-types {
  left: 21px;
  top: 762px;
  width: 400px;
  height: 170px;
  padding-left: 4px;
}

.types {
  height: 105px;
  overflow: hidden;
  background: #fff;
  border-left: 1px solid #808080;
  white-space: nowrap;
}

.types li {
  display: flex;
  align-items: center;
  gap: 1px;
  height: 17px;
  padding-left: 17px;
}

.types svg {
  width: 24px;
  height: 14px;
}

.fact {
  color: #808080;
}

.win-types .status {
  margin-top: 2px;
}

/* Project manager */
.pm {
  left: 0;
  top: 96px;
  width: 1036px;
  height: 684px;
}

.pm-body {
  flex: 1;
  display: grid;
  grid-template-columns: 488px 1fr;
  gap: 6px;
  min-height: 0;
}

.files,
.props {
  display: flex;
  flex-direction: column;
  border-left: 1px solid #808080;
}

.files {
  background: #fff;
}

.head {
  display: flex;
  align-items: center;
  height: 21px;
  flex: none;
  padding-left: 4px;
  background: #c0c0c0;
  border: 1px solid #808080;
  border-left: 0;
  box-shadow: inset 1px 1px #fff;
}

.head .i16 {
  margin: 0 1px 0 -3px;
}

.prop-text {
  padding-left: 4px;
  white-space: nowrap;
}

.tree li {
  position: relative;
}

.tree ul {
  padding-left: 19px;
}

.tree ul > li::before {
  content: "";
  position: absolute;
  left: 8px;
  top: 0;
  bottom: 0;
  border-left: 1px dotted #808080;
}

.tree ul > li:last-child::before {
  bottom: auto;
  height: 8px;
}

.row {
  position: relative;
  display: flex;
  align-items: center;
  height: 16px;
  padding-left: 4px;
  white-space: nowrap;
}

.row.leaf {
  padding-left: 8px;
}

.row svg {
  width: 16px;
  height: 16px;
  margin-right: 2px;
  shape-rendering: crispEdges;
}

.row b {
  font-size: 12px;
}

.row b,
.row span {
  padding: 0 3px;
}

.row .selected {
  background: #c0c0c0;
}

.dots {
  width: 6px;
  border-top: 1px dotted #808080;
}

.leaf .dots {
  width: 11px;
}

.box {
  width: 9px;
  height: 9px;
  border: 1px solid #808080;
  background: linear-gradient(#000, #000) center / 5px 1px no-repeat #fff;
}

/* Text document */
.doc-window {
  left: 242px;
  top: 242px;
  width: 1440px;
  height: 759px;
}

.editor {
  flex: 1;
  min-height: 0;
  display: grid;
  grid-template-columns: 1fr 16px;
  grid-template-rows: 1fr 16px;
  margin: 4px 4px 6px;
  border: 1px solid;
  border-color: #808080 #fff #fff #808080;
}

.page {
  position: relative;
  display: flex;
  min-height: 0;
  overflow: hidden;
  background: #fff;
}

.gutter {
  width: 43px;
  padding-right: 2px;
  background: #c0c0c0;
  border-right: 1px solid #dfdfdf;
  font-family: "Liberation Mono", "Courier New", monospace;
  font-size: 10px;
  text-align: right;
}

.page textarea {
  flex: 1;
  margin: 0 0 0 1px;
  padding: 0 0 0 2px;
  border: 0;
  outline: 0;
  resize: none;
  overflow: hidden;
  background: linear-gradient(#c0c0c0, #c0c0c0) 642px 0 / 1px 100% no-repeat #fff;
  color: #000;
  font-family: "Liberation Mono", "Courier New", monospace;
  font-size: 13px;
  line-height: 16px;
  white-space: pre;
}

.caret {
  position: absolute;
  left: 46px;
  top: 0;
  width: 2px;
  height: 14px;
  background: #000;
}

.last {
  justify-content: flex-end;
  padding: 0;
}

.grip {
  width: 13px;
  height: 13px;
}

.marker {
  position: absolute;
  left: 0;
  top: 0;
  width: 100%;
  height: 100%;
  fill: #ff0;
  mix-blend-mode: multiply;
  pointer-events: none;
  shape-rendering: crispEdges;
}

/* Taskbar */
.taskbar {
  display: flex;
  align-items: center;
  gap: 2px;
  height: 44px;
  flex: none;
  padding: 1px 2px 0;
  background: #c0c0c0;
  border-top: 1px solid #dfdfdf;
  box-shadow: inset 0 1px #fff;
}

.task {
  display: flex;
  align-items: center;
  justify-content: center;
  height: 38px;
  border: 1px solid;
  border-color: #fff #000 #000 #fff;
  box-shadow: inset -1px -1px #808080;
}

.task svg {
  width: 34px;
  height: 32px;
}

.task .i16 {
  width: 16px;
  height: 16px;
}

.task .i28 {
  width: 28px;
  height: 28px;
}

.start {
  width: 52px;
  gap: 1px;
  font-size: 12px;
  font-weight: bold;
}

.tool {
  width: 49px;
}

.flat {
  width: 48px;
  border-color: transparent;
  box-shadow: none;
}

.start + .flat {
  width: 55px;
  padding-left: 6px;
}

.wide {
  width: 160px;
  justify-content: flex-start;
  gap: 6px;
  padding-left: 4px;
}

.wide svg {
  width: 28px;
  height: 32px;
}

.current {
  background: #fff;
  border-color: #000 #fff #fff #000;
  box-shadow: inset 1px 1px #808080, inset -1px -1px #dfdfdf;
  font-size: 12px;
  font-weight: bold;
}

.tray {
  display: flex;
  align-items: center;
  gap: 8px;
  height: 38px;
  margin-left: auto;
  padding: 0 2px 0 8px;
  border: 1px solid;
  border-color: #808080 #fff #fff #808080;
}

.chev {
  width: 6px;
  height: 10px;
  margin-right: 2px;
}

.tray time {
  display: flex;
  flex-direction: column;
  align-items: center;
  margin-left: 5px;
}
```
